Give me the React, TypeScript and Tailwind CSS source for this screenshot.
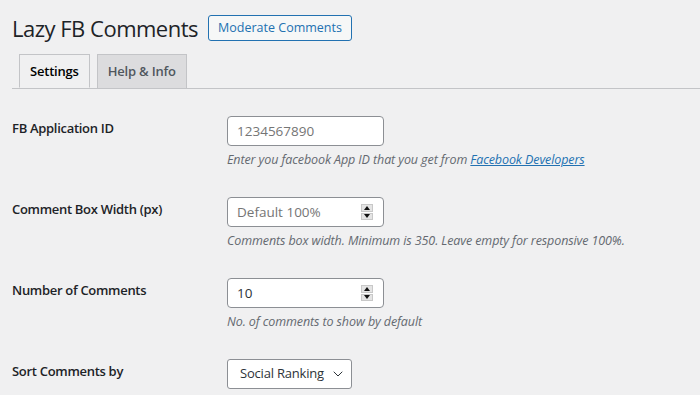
import { ChevronDown } from "lucide-react";

const font = { fontFamily: '"Open Sans", "Noto Sans", Arial, sans-serif' };

// little up/down stepper like the native one on windows
const Spinner = () => (
  <div className="flex flex-col w-[12px] h-[16px] gap-[1px] mr-[10px]">
    <div className="flex-1 bg-[#e4e4e4] border border-[#c8c8c8] flex items-center justify-center">
      <svg width="6" height="4" viewBox="0 0 6 4">
        <path d="M0 4 L3 0 L6 4 Z" fill="#111" />
      </svg>
    </div>
    <div className="flex-1 bg-[#e4e4e4] border border-[#c8c8c8] flex items-center justify-center">
      <svg width="6" height="4" viewBox="0 0 6 4">
        <path d="M0 0 L3 4 L6 0 Z" fill="#111" />
      </svg>
    </div>
  </div>
);

interface RowProps {
  label: string;
  children: React.ReactNode;
  desc?: React.ReactNode;
}

const Row = ({ label, children, desc }: RowProps) => (
  <div className="flex h-[81px]">
    <div className="w-[215px] pt-[3px] text-[13px] tracking-[-0.3px] leading-[18px] font-semibold text-[#1d2327]">
      {label}
    </div>
    <div>
      {children}
      {desc && (
        <p className="mt-1 text-[12.5px] tracking-[-0.1px] leading-[20px] italic text-[#646970] whitespace-nowrap">
          {desc}
        </p>
      )}
    </div>
  </div>
);

export default function App() {
  return (
    <div className="h-[395px] bg-[#f0f0f1] pl-3 overflow-hidden" style={font}>
      {/* Heading */}
      <div className="flex items-center pt-[15px] h-[41px]">
        <h1 className="text-[22px] tracking-[-0.5px] leading-[26px] font-normal text-[#1d2327] mr-[10px]">
          Lazy FB Comments
        </h1>
        <button className="h-[26px] px-[9px] border border-[#2271b1] rounded-[3px] bg-[#f6f7f7] text-[#2271b1] text-[12.5px] leading-[24px]">
          Moderate Comments
        </button>
      </div>

      {/* Tabs */}
      <div className="flex gap-[7px] pl-[7px] mt-[13px] border-b border-[#c3c4c7]">
        <div className="h-[34px] px-[10px] -mb-px border border-[#c3c4c7] border-b-[#f0f0f1] bg-[#f0f0f1] text-[13px] tracking-[-0.2px] font-semibold leading-[32px] text-black">
          Settings
        </div>
        <div className="h-[34px] px-[10px] border border-b-0 border-[#c3c4c7] bg-[#dcdcde] text-[13px] tracking-[-0.2px] font-semibold leading-[32px] text-[#50575e]">
          Help &amp; Info
        </div>
      </div>

      {/* Form */}
      <div className="pt-[27px]">
        <Row
          label="FB Application ID"
          desc={
            <>
              Enter you facebook App ID that you get from{" "}
              <a href="#" className="underline text-[#2271b1]">
                Facebook Developers
              </a>
            </>
          }
        >
          <input
            type="text"
            placeholder="1234567890"
            className="w-[157px] h-[30px] px-[9px] bg-white border border-[#8c8f94] rounded-[4px] text-[13.5px] text-[#2c3338] placeholder:text-[#757575] outline-none"
          />
        </Row>

        <Row
          label="Comment Box Width (px)"
          desc="Comments box width. Minimum is 350. Leave empty for responsive 100%."
        >
          <div className="flex items-center w-[157px] h-[30px] bg-white border border-[#8c8f94] rounded-[4px]">
            <input
              type="text"
              placeholder="Default 100%"
              className="flex-1 min-w-0 px-[9px] text-[13.5px] text-[#2c3338] placeholder:text-[#757575] outline-none bg-transparent"
            />
            <Spinner />
          </div>
        </Row>

        <Row label="Number of Comments" desc="No. of comments to show by default">
          <div className="flex items-center w-[157px] h-[30px] bg-white border border-[#8c8f94] rounded-[4px]">
            <input
              type="text"
              defaultValue="10"
              className="flex-1 min-w-0 px-[9px] text-[13.5px] text-[#2c3338] outline-none bg-transparent"
            />
            <Spinner />
          </div>
        </Row>

        <Row label="Sort Comments by">
          <div className="flex items-center justify-between w-[125px] h-[30px] pl-3 pr-[5px] bg-white border border-[#8c8f94] rounded-[3px] text-[13px] tracking-[-0.2px] text-[#2c3338] whitespace-nowrap">
            <span>Social Ranking</span>
            <ChevronDown size={16} strokeWidth={1.5} className="text-[#2c3338] shrink-0" />
          </div>
        </Row>
      </div>
    </div>
  );
}
